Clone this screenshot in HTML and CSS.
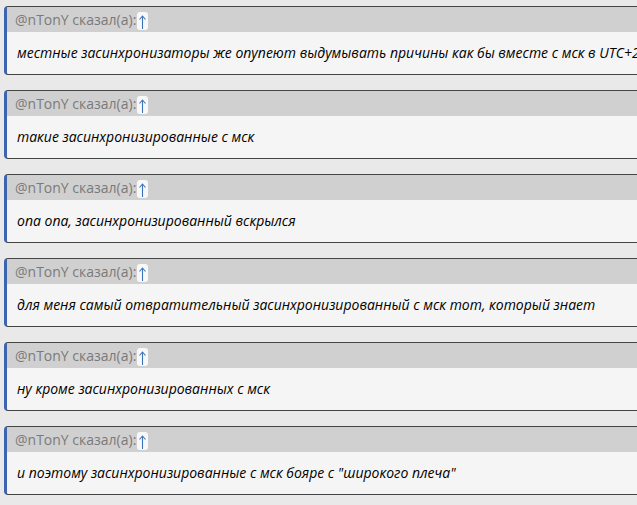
FILE: index.html
```html
<!DOCTYPE html>
<html lang="ru">
<head>
  <meta charset="UTF-8" />
  <title>Цитаты</title>
  <meta name="viewport" content="width=device-width, initial-scale=1.0" />
  <link rel="stylesheet" href="styles.css">
</head>
<body>
  <div class="thread">
    <div class="quote">
      <div class="quote-head">@nTonY сказал(а):<span class="up"><svg viewBox="0 0 11 18"><path d="M5.5 17V4M2.5 7.5L5.5 4L8.5 7.5"/></svg></span></div>
      <div class="quote-body">местные засинхронизаторы же опупеют выдумывать причины как бы вместе с мск в UTC+2</div>
    </div>
    <div class="quote">
      <div class="quote-head">@nTonY сказал(а):<span class="up"><svg viewBox="0 0 11 18"><path d="M5.5 17V4M2.5 7.5L5.5 4L8.5 7.5"/></svg></span></div>
      <div class="quote-body">такие засинхронизированные с мск</div>
    </div>
    <div class="quote">
      <div class="quote-head">@nTonY сказал(а):<span class="up"><svg viewBox="0 0 11 18"><path d="M5.5 17V4M2.5 7.5L5.5 4L8.5 7.5"/></svg></span></div>
      <div class="quote-body">опа опа, засинхронизированный вскрылся</div>
    </div>
    <div class="quote">
      <div class="quote-head">@nTonY сказал(а):<span class="up"><svg viewBox="0 0 11 18"><path d="M5.5 17V4M2.5 7.5L5.5 4L8.5 7.5"/></svg></span></div>
      <div class="quote-body">для меня самый отвратительный засинхронизированный с мск тот, который знает</div>
    </div>
    <div class="quote">
      <div class="quote-head">@nTonY сказал(а):<span class="up"><svg viewBox="0 0 11 18"><path d="M5.5 17V4M2.5 7.5L5.5 4L8.5 7.5"/></svg></span></div>
      <div class="quote-body">ну кроме засинхронизированных с мск</div>
    </div>
    <div class="quote">
      <div class="quote-head">@nTonY сказал(а):<span class="up"><svg viewBox="0 0 11 18"><path d="M5.5 17V4M2.5 7.5L5.5 4L8.5 7.5"/></svg></span></div>
      <div class="quote-body">и поэтому засинхронизированные с мск бояре с "широкого плеча"</div>
    </div>
  </div>
</body>
</html>
```

FILE: styles.css
```css
html, body {
  overflow: hidden;
}
body {
  font-family: 'Open Sans', 'Noto Sans', sans-serif;
  background-color: #e9e9e9;
  margin: 0;
  padding: 6px 0 0 4px;
  color: #000;
}
.thread {
  display: flex;
  flex-direction: column;
  gap: 15px;
  width: 660px;
}
.quote {
  border: 1px solid #444;
  border-left: 3px solid #3d64ae;
  border-radius: 4px 0 0 4px;
  overflow: hidden;
}
.quote-head {
  background: #d0d0d0;
  color: #7a7a7a;
  font-size: 14px;
  height: 25px;
  line-height: 25px;
  padding-left: 8px;
  white-space: nowrap;
}
.up {
  display: inline-block;
  background: #f8f8f8;
  border-radius: 3px;
  width: 11px;
  height: 18px;
  margin-left: 1px;
  vertical-align: top;
  position: relative;
  top: 5px;
}
.up svg {
  display: block;
  width: 11px;
  height: 18px;
  fill: none;
  stroke: #3d74b8;
  stroke-width: 1.1;
}
.quote-body {
  background: #f5f5f5;
  font-style: italic;
  font-size: 14px;
  height: 42px;
  line-height: 42px;
  padding-left: 10px;
  white-space: nowrap;
}
```
